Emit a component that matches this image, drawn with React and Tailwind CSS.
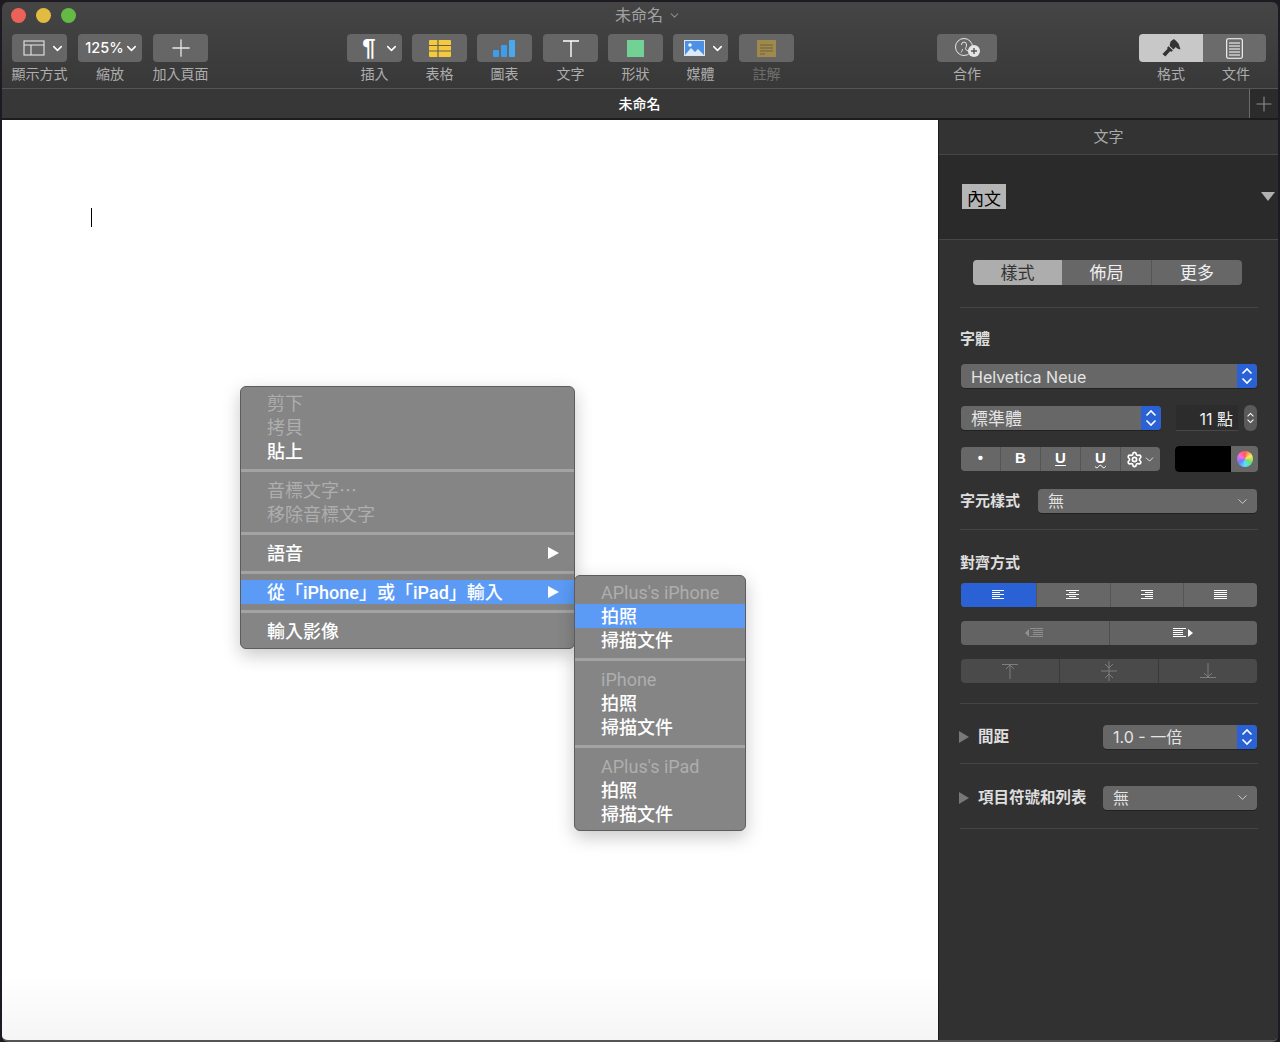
import { ChevronDown, Plus, Settings } from "lucide-react";

function Chevron({ className = "w-[15px] h-[15px] text-white" }) {
  return <ChevronDown className={className} strokeWidth={2.4} />;
}

function Stepper({ className = "w-[20px] h-[24px]" }) {
  return (
    <svg viewBox="0 0 20 24" className={className} fill="none" stroke="white" strokeWidth="1.6">
      <path d="M5.500 9.500 10 5l4.500 4.500M5.500 14.500 10 19l4.500-4.500" />
    </svg>
  );
}

function LayoutIcon() {
  return (
    <svg viewBox="0 0 22 16" className="w-[22px] h-[16px] ml-[8px]" fill="none" stroke="#e6e6e6" strokeWidth="1.1">
      <rect x="1" y="1" width="20" height="14" />
      <path d="M1 5h20M8 5v10" />
    </svg>
  );
}

function TableIcon() {
  return (
    <svg viewBox="0 0 22 17" className="w-[22px] h-[17px]">
      <rect width="22" height="17" rx="1" fill="#f4c93c" />
      <path d="M0 5.500h22M0 11h22M9 0v17" stroke="#62605a" strokeWidth="1.200" />
    </svg>
  );
}

function ChartIcon() {
  return (
    <svg viewBox="0 0 23 17" className="w-[23px] h-[17px]">
      <rect x="0" y="10" width="6" height="7" rx="1" fill="#3f9ce8" />
      <rect x="8" y="5" width="6" height="12" rx="1" fill="#3f9ce8" />
      <rect x="16" y="0" width="6" height="17" rx="1" fill="#4aa8ef" />
    </svg>
  );
}

function TextIcon() {
  return (
    <svg viewBox="0 0 16 17" className="w-[16px] h-[17px]" fill="none" stroke="white" strokeWidth="1.400">
      <path d="M0 1h16M8 1v16" />
    </svg>
  );
}

function MediaIcon() {
  return (
    <svg viewBox="0 0 21 16" className="w-[21px] h-[16px] ml-[8px]">
      <rect width="21" height="16" fill="#dbe6f3" />
      <rect x="1" y="1" width="19" height="14" fill="#4c90e8" />
      <circle cx="6" cy="5" r="1.700" fill="white" />
      <path d="M1 15 7 8l4 4 3-3 6 6z" fill="#dcebfa" />
    </svg>
  );
}

function NoteIcon() {
  return (
    <svg viewBox="0 0 19 17" className="w-[19px] h-[17px]">
      <rect width="19" height="17" fill="#a08a4b" />
      <path d="M3 5h13M3 8h13M3 11h13M3 14h5" stroke="#6d6244" strokeWidth="1" />
    </svg>
  );
}

function CollabIcon() {
  return (
    <svg viewBox="0 0 27 20" className="w-[27px] h-[20px]" fill="none">
      <circle cx="10" cy="9" r="8.500" stroke="#e6e6e6" strokeWidth="1" />
      <path d="M7.500 7a2.500 3 0 0 1 5 0c0 2-1 3-1 4 0 1 2.500 1.500 3.500 3M7 14.500c1-1.500 1.500-2.500 1.500-3.500" stroke="#e6e6e6" strokeWidth="1" />
      <circle cx="20" cy="13" r="6" fill="#e6e6e6" />
      <path d="M17 13h6M20 10v6" stroke="#555" strokeWidth="1.400" />
    </svg>
  );
}

function BrushIcon() {
  return (
    <svg viewBox="0 0 20 20" className="w-[19px] h-[19px]" fill="#333333">
      <path d="M9 2.500 12.500 0 15 2l2.500 3 2 6-3.500-1-1.500-1.500-2.500 2.500-4-4z" />
      <path d="M7 7.500l4.500 4.500-1.500 1.500-1.500-.5-5 5.500-3-2.700 5.200-5.300-.2-1.500z" />
    </svg>
  );
}

function DocIcon() {
  return (
    <svg viewBox="0 0 17 21" className="w-[17px] h-[21px]" fill="none" stroke="white">
      <rect x="0.700" y="0.700" width="15.600" height="19.600" rx="1.500" strokeWidth="1.100" />
      <path d="M3 5h11M3 8h11M3 11h11M3 14h11M3 17h11" strokeWidth="1" />
    </svg>
  );
}

function AlignIcon({ lines, color = "white" }) {
  // lines: [x1, x2] per row, in a 14 wide box
  return (
    <svg viewBox="0 0 14 12" className="w-[14px] h-[12px]" stroke={color} strokeWidth="1.200">
      {lines.map(([a, b], i) => (
        <path key={i} d={`M${a} ${1 + i * 2}.500H${b}`} />
      ))}
    </svg>
  );
}

function ToolItem({ label, width = "w-[55px]", gap, dim, children }) {
  return (
    <div className={`flex flex-col items-center ${width} ${gap || ""}`}>
      <div className="w-full h-[28px] rounded-[4px] bg-[#666666] flex items-center justify-center gap-[5px]">
        {children}
      </div>
      <div className={`mt-[2px] text-[14px] leading-[20px] whitespace-nowrap ${dim ? "text-[#6e6e6e]" : "text-[#adadad]"}`}>
        {label}
      </div>
    </div>
  );
}

function Toolbar() {
  return (
    <div className="h-[86px] shrink-0 bg-gradient-to-b from-[#454545] to-[#383838]">
      <div className="h-[32px] relative flex items-center justify-center gap-[5px] pl-[16px]">
        <div className="absolute left-[9px] top-[6px] flex gap-[10px]">
          <div className="w-[15px] h-[15px] rounded-full bg-[#ec6259]" />
          <div className="w-[15px] h-[15px] rounded-full bg-[#e1bb42]" />
          <div className="w-[15px] h-[15px] rounded-full bg-[#63bb46]" />
        </div>
        <span className="text-[16px] leading-[22px] text-[#a0a0a0] -mt-[7px]">未命名</span>
        <ChevronDown className="w-[13px] h-[13px] text-[#8a8a8a] -mt-[5px]" strokeWidth={2} />
      </div>
      <div className="flex pl-[10px]">
        <ToolItem label="顯示方式">
          <LayoutIcon />
          <Chevron />
        </ToolItem>
        <ToolItem label="縮放" width="w-[64px]" gap="ml-[11px]">
          <span className="text-[14.500px] font-medium text-white ml-[4px] -mr-[5px]">125%</span>
          <Chevron />
        </ToolItem>
        <ToolItem label="加入頁面" gap="ml-[11px]">
          <Plus className="w-[28px] h-[28px] text-[#e8e8e8]" strokeWidth={1.100} />
        </ToolItem>
        <ToolItem label="插入" gap="ml-[139px]">
          <span className="ml-[12px] mr-[3px] text-[24px] leading-none font-bold text-white font-['Liberation_Sans',sans-serif]">¶</span>
          <Chevron />
        </ToolItem>
        <ToolItem label="表格" gap="ml-[10px]"><TableIcon /></ToolItem>
        <ToolItem label="圖表" gap="ml-[10px]"><ChartIcon /></ToolItem>
        <ToolItem label="文字" gap="ml-[11px]"><TextIcon /></ToolItem>
        <ToolItem label="形狀" gap="ml-[10px]">
          <div className="w-[17px] h-[17px] bg-[#72d195]" />
        </ToolItem>
        <ToolItem label="媒體" gap="ml-[10px]">
          <MediaIcon />
          <Chevron />
        </ToolItem>
        <ToolItem label="註解" gap="ml-[11px]" dim><NoteIcon /></ToolItem>
        <ToolItem label="合作" width="w-[60px]" gap="ml-[143px]"><CollabIcon /></ToolItem>
        <div className="ml-[142px] flex flex-col">
          <div className="flex h-[28px] w-[127px] rounded-[4px] overflow-hidden">
            <div className="w-[64px] bg-[#c8c8c8] flex items-center justify-center"><BrushIcon /></div>
            <div className="flex-1 bg-[#6b6b6b] flex items-center justify-center"><DocIcon /></div>
          </div>
          <div className="flex mt-[2px] text-[14px] leading-[20px] text-[#adadad]">
            <div className="w-[64px] text-center">格式</div>
            <div className="flex-1 text-center pl-[3px]">文件</div>
          </div>
        </div>
      </div>
    </div>
  );
}

function TabBar() {
  return (
    <div className="h-[32px] shrink-0 flex border-t border-[#555555] border-b-2 border-b-[#1c1c1c] bg-[#373737]">
      <div className="flex-1 flex items-center justify-center text-[14px] font-medium text-white pl-[28px]">未命名</div>
      <div className="w-[29px] bg-[#2b2b2b] border-l border-[#6a6a6a] flex items-center justify-center">
        <Plus className="w-[24px] h-[24px] text-[#8e8e8e]" strokeWidth={1.100} />
      </div>
    </div>
  );
}

function MenuRow({ label, dim, active, arrow, pad = "pl-[26px]" }) {
  return (
    <div className={`h-[24px] flex items-center justify-between ${pad} pr-[15px] text-[18px] leading-[24px] font-['Roboto','Noto_Sans_CJK_TC',sans-serif] whitespace-nowrap ${active ? "bg-[#5b9bf6]" : ""} ${dim ? "text-[#aeaeae]" : "text-white font-medium"}`}>
      <span className="pt-[2px]">{label}</span>
      {arrow && <div className="w-0 h-0 border-y-[6px] border-y-transparent border-l-[11px] border-l-white" />}
    </div>
  );
}

function MenuSep() {
  return (
    <div className="py-[6px]">
      <div className="h-[3px] bg-[#a3a3a3]" />
    </div>
  );
}

function ContextMenu() {
  return (
    <div className="absolute left-[238px] top-[266px] w-[335px] pt-[4px] pb-[5px] rounded-[6px] bg-[#858585] border border-[#5c5c5c] shadow-[0_6px_18px_rgba(0,0,0,0.22)]">
      <MenuRow label="剪下" dim />
      <MenuRow label="拷貝" dim />
      <MenuRow label="貼上" />
      <MenuSep />
      <MenuRow label="音標文字⋯" dim />
      <MenuRow label="移除音標文字" dim />
      <MenuSep />
      <MenuRow label="語音" arrow />
      <MenuSep />
      <MenuRow label="從「iPhone」或「iPad」輸入" active arrow />
      <MenuSep />
      <MenuRow label="輸入影像" />
    </div>
  );
}

function SubMenu() {
  const groups = [["APlus's iPhone", true], ["iPhone"], ["APlus's iPad"]];
  return (
    <div className="absolute left-[572px] top-[455px] w-[172px] py-[4px] rounded-[6px] bg-[#858585] border border-[#5c5c5c] shadow-[0_6px_18px_rgba(0,0,0,0.22)]">
      {groups.map(([name, first], i) => (
        <div key={name}>
          {i > 0 && <MenuSep />}
          <MenuRow label={name} dim />
          <MenuRow label="拍照" active={first} />
          <MenuRow label="掃描文件" />
        </div>
      ))}
    </div>
  );
}

function Canvas() {
  return (
    <div className="relative flex-1 bg-gradient-to-b from-white from-[93%] to-[#f5f5f5] pt-[88px] pl-[89px]">
      <div className="w-px h-[19px] bg-black" />
      <ContextMenu />
      <SubMenu />
    </div>
  );
}

function Select({ label, width, mt, blue, size = "text-[16px]" }) {
  return (
    <div className={`h-[24px] ${width} ${mt || ""} flex rounded-[4px] overflow-hidden bg-[#676767] shadow-[0_1px_0_#222]`}>
      <div className={`flex-1 pl-[10px] ${size} leading-[24px] text-[#e4e4e4] whitespace-nowrap`}>
        {label}
      </div>
      {blue ? (
        <div className="w-[20px] bg-[#2a62d6] flex items-center justify-center"><Stepper /></div>
      ) : (
        <div className="w-[30px] flex items-center justify-center">
          <ChevronDown className="w-[15px] h-[15px] text-[#d0d0d0]" strokeWidth={1.500} />
        </div>
      )}
    </div>
  );
}

function Divider({ mt }) {
  return <div className={`h-px bg-[#454545] ${mt}`} />;
}

function Disclosure() {
  return <div className="-ml-[1px] w-0 h-0 border-y-[6px] border-y-transparent border-l-[10px] border-l-[#787878]" />;
}

function Sidebar() {
  const alignments = [
    [[0, 12], [0, 8], [0, 12], [0, 8], [0, 12]],
    [[0, 13], [3, 10], [0, 13], [3, 10], [0, 13]],
    [[1, 13], [5, 13], [1, 13], [5, 13], [1, 13]],
    [[0, 13], [0, 13], [0, 13], [0, 13], [0, 13]],
  ];
  return (
    <div className="w-[340px] shrink-0 bg-[#313131] border-l border-[#1c1c1c] flex flex-col text-[#dedede]">
      <div className="h-[35px] shrink-0 border-b border-[#474747] bg-[#333333] flex items-center justify-center text-[15px] text-[#a9a9a9]">文字</div>
      <div className="h-[85px] shrink-0 bg-[#2a2a2a] border-b border-[#474747] flex items-start justify-between pl-[23px] pr-[3px] pt-[29px]">
        <div className="w-[44px] h-[25px] bg-[#b5b5b5] text-black text-[17px] leading-[30px] text-center">內文</div>
        <div className="mt-[8px] w-0 h-0 border-x-[7px] border-x-transparent border-t-[9px] border-t-[#b0b0b0]" />
      </div>
      <div className="flex-1 pl-[21px] pr-[20px]">
        <div className="ml-[13px] mt-[20px] mr-[16px] h-[25px] flex rounded-[4px] overflow-hidden text-[17px] leading-[26px] text-center">
          <div className="w-[89px] bg-[#adadad] text-[#333333]">樣式</div>
          <div className="w-[90px] bg-[#676767] text-[#f0f0f0] border-r border-[#555555]">佈局</div>
          <div className="flex-1 bg-[#676767] text-[#f0f0f0]">更多</div>
        </div>
        <Divider mt="mt-[22px]" />
        <div className="mt-[20px] text-[15px] leading-[22px] font-semibold">字體</div>
        <Select label="Helvetica Neue" width="w-[296px] ml-[1px]" mt="mt-[14px]" size="text-[16px] pt-[1px]" blue />

        <div className="mt-[17px] ml-[1px] flex items-center">
          <Select label="標準體" width="w-[200px]" size="text-[17px] pt-[1px]" blue />
          <div className="ml-[15px] w-[62px] h-[26px] bg-[#2c2c2c] border-b border-[#484848] text-right pr-[5px] text-[16px] leading-[28px] text-[#f0f0f0]">11 點</div>
          <div className="ml-[6px] w-[13px] h-[26px] rounded-[6px] bg-[#5a5a5a] flex items-center justify-center"><Stepper className="w-[13px] h-[24px] shrink-0" /></div>
        </div>

        <div className="mt-[15px] ml-[1px] flex items-center">
          <div className="w-[200px] h-[24px] flex rounded-[4px] overflow-hidden bg-[#676767] text-white text-[15px] leading-[22px] font-bold text-center font-['Liberation_Sans',sans-serif]">
            <div className="w-[40px] border-r border-[#555555]">•</div>
            <div className="w-[40px] border-r border-[#555555]">B</div>
            <div className="w-[40px] border-r border-[#555555] underline underline-offset-2">U</div>
            <div className="w-[40px] border-r border-[#555555] underline decoration-wavy decoration-1 underline-offset-1">U</div>
            <div className="flex-1 flex items-center justify-center">
              <Settings className="w-[17px] h-[17px]" strokeWidth={2.400} />
              <ChevronDown className="w-[13px] h-[13px]" strokeWidth={1.500} />
            </div>
          </div>
          <div className="ml-[15px] w-[83px] h-[26px] flex rounded-[4px] overflow-hidden bg-[#676767]">
            <div className="w-[56px] bg-black" />
            <div className="flex-1 flex items-center justify-center">
              <div className="w-[16px] h-[16px] rounded-full bg-[conic-gradient(#ff5a5a,#ffe95a,#6be06b,#5ae0ff,#6a7bff,#ff6ae0,#ff5a5a)]" />
            </div>
          </div>
        </div>

        <div className="mt-[17px] flex items-center">
          <div className="w-[78px] text-[15px] font-semibold leading-[22px] whitespace-nowrap">字元樣式</div>
          <Select label="無" width="w-[219px]" />
        </div>
        <Divider mt="mt-[16px]" />

        <div className="mt-[22px] text-[15px] leading-[22px] font-semibold">對齊方式</div>
        <div className="mt-[9px] ml-[1px] w-[296px] h-[24px] flex rounded-[4px] overflow-hidden bg-[#676767]">
          {alignments.map((lines, i) => (
            <div key={i} className={`flex items-center justify-center ${i === 0 ? "w-[75px] bg-[#2a62d6]" : "flex-1 border-l border-[#555555]"}`}>
              <AlignIcon lines={lines} />
            </div>
          ))}
        </div>
        <div className="mt-[14px] ml-[1px] w-[296px] h-[24px] flex rounded-[4px] overflow-hidden bg-[#636363]">
          <div className="flex-1 flex items-center justify-center gap-[1px] border-r border-[#4f4f4f]">
            <div className="w-0 h-0 border-y-[4px] border-y-transparent border-r-[4px] border-r-[#8f8f8f]" />
            <AlignIcon lines={[[0, 13], [3, 13], [3, 13], [3, 13], [0, 13]]} color="#8f8f8f" />
          </div>
          <div className="flex-1 flex items-center justify-center gap-[1px]">
            <AlignIcon lines={[[0, 13], [0, 10], [0, 10], [0, 10], [0, 13]]} />
            <div className="w-0 h-0 border-y-[4px] border-y-transparent border-l-[5px] border-l-white" />
          </div>
        </div>
        <div className="mt-[14px] ml-[1px] w-[296px] h-[24px] flex rounded-[4px] overflow-hidden bg-[#4a4a4a]">
          <div className="flex-1 flex items-center justify-center">
            <svg viewBox="0 0 16 16" className="w-[16px] h-[16px]" fill="none" stroke="#7d7d7d"><path d="M0 1.500h16M8 2v14M4 6l4-4 4 4" /></svg>
          </div>
          <div className="flex-1 flex items-center justify-center border-x border-[#3a3a3a]">
            <svg viewBox="0 0 16 20" className="w-[16px] h-[20px]" fill="none" stroke="#7d7d7d"><path d="M0 10h16M8 0v20M4 3l4 4 4-4M4 17l4-4 4 4" /></svg>
          </div>
          <div className="flex-1 flex items-center justify-center">
            <svg viewBox="0 0 16 16" className="w-[16px] h-[16px]" fill="none" stroke="#7d7d7d"><path d="M0 14.500h16M8 0v14M4 10l4 4 4-4" /></svg>
          </div>
        </div>
        <Divider mt="mt-[20px]" />

        <div className="mt-[21px] flex items-center">
          <Disclosure />
          <div className="ml-[9px] w-[125px] text-[15.500px] font-semibold leading-[22px]">間距</div>
          <Select label="1.0 - 一倍" width="w-[154px]" blue />
        </div>
        <Divider mt="mt-[14px]" />
        <div className="mt-[21px] flex items-center">
          <Disclosure />
          <div className="ml-[9px] w-[125px] text-[15.500px] font-semibold leading-[24px] pt-[1px] whitespace-nowrap">項目符號和列表</div>
          <Select label="無" width="w-[154px]" />
        </div>
        <Divider mt="mt-[18px]" />
      </div>
    </div>
  );
}

export default function App() {
  return (
    <div className="w-[1280px] h-[1042px] overflow-hidden bg-[#1d1a22] pl-[2px] pr-[2px] pt-[2px] font-['Inter','Noto_Sans_CJK_TC',sans-serif]">
      <div className="h-full flex flex-col rounded-t-[6px] rounded-b-[6px] overflow-hidden border-b-2 border-[#555555]">
        <Toolbar />
        <TabBar />
        <div className="flex-1 flex min-h-0">
          <Canvas />
          <Sidebar />
        </div>
      </div>
    </div>
  );
}
